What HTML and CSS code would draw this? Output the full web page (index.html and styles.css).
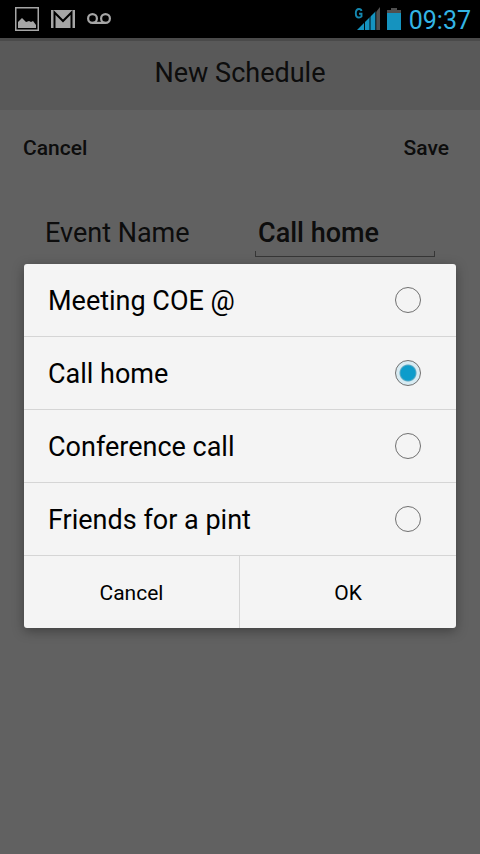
FILE: index.html
```
<!DOCTYPE html>
<html lang="en">
<head>
<meta charset="utf-8">
<meta name="viewport" content="width=device-width, initial-scale=1">
<title>New Schedule</title>
<link rel="stylesheet" href="styles.css">
</head>
<body>
<div class="status-bar">
  <div class="status-group notices">
    <svg width="24" height="24" viewBox="0 0 24 24" role="img" aria-label="Picture"><rect x="0.750" y="0.750" width="22.500" height="22.500" fill="none" stroke="#a6a6a6" stroke-width="1.500"/><path d="M3 21V15l4-4 4 4 3-1 2 1 2-1 3 4v3z" fill="#a6a6a6"/></svg>
    <svg width="24" height="20" viewBox="0 0 24 20" role="img" aria-label="Mail"><path d="M0 1h24v18H0z" fill="#a6a6a6"/><path d="M3.500 19V3.500L12 12l8.500-8.500V19" fill="none" stroke="#000" stroke-width="2"/></svg>
    <svg width="24" height="14" viewBox="0 0 24 14" role="img" aria-label="Voicemail"><g fill="none" stroke="#a6a6a6" stroke-width="2.200"><circle cx="5.500" cy="6.500" r="4.400"/><circle cx="18.500" cy="6.500" r="4.400"/><path d="M5.500 10.900h13"/></g></svg>
  </div>
  <div class="status-group system">
    <svg width="27" height="26" viewBox="0 0 27 26" role="img" aria-label="Signal"><path d="M7.500 5C7.200 3.600 6.300 3 5 3 3 3 1.800 4.500 1.800 7.200S3 11.500 5 11.500c1 0 1.900-.3 2.500-1V7.800H5" fill="none" stroke="#1488b0" stroke-width="1.900"/><path d="M22 6l4-5v23h-4z" fill="#505050"/><path d="M3 24L22 5v19z" fill="#1593bf"/><path d="M10.500 12v12M16 6v18M21.800 3v21" stroke="#000" stroke-width="0.900"/></svg>
    <svg width="14" height="22" viewBox="0 0 14 22" role="img" aria-label="Battery"><path d="M0 2h4V0h6v2h4v4H0z" fill="#505050"/><path d="M0 5h14v17H0z" fill="#1593bf"/></svg>
    <time class="clock">09:37</time>
  </div>
</div>
<div class="screen">
  <main class="page">
    <header class="title-bar"><h1>New Schedule</h1></header>
    <div class="actions">
      <button type="button">Cancel</button>
      <button type="button">Save</button>
    </div>
    <div class="field">
      <label for="event-name">Event Name</label>
      <div class="entry"><input id="event-name" type="text" value="Call home"></div>
    </div>
  </main>
  <div class="scrim">
    <form class="dialog" role="dialog" aria-label="Event Name">
      <label class="option"><span>Meeting COE @</span><input type="radio" name="event"></label>
      <label class="option"><span>Call home</span><input type="radio" name="event" checked></label>
      <label class="option"><span>Conference call</span><input type="radio" name="event"></label>
      <label class="option"><span>Friends for a pint</span><input type="radio" name="event"></label>
      <div class="dialog-buttons">
        <button type="button">Cancel</button>
        <button type="button">OK</button>
      </div>
    </form>
  </div>
</div>
</body>
</html>
```
FILE: styles.css
```
* { box-sizing: border-box; }

body {
  margin: 0;
  min-height: 100vh;
  display: flex;
  flex-direction: column;
  font-family: Roboto, "Liberation Sans", sans-serif;
  font-size: 27px;
  line-height: 32px;
  color: #000;
}

button, input { font: inherit; color: inherit; }

button {
  border: 0;
  padding: 0;
  background: none;
  font-size: 21px;
}

.status-bar {
  display: flex;
  justify-content: space-between;
  height: 38px;
  padding: 0 9px 0 15px;
  background: #000;
}

.status-group { display: flex; align-items: center; }
.notices { gap: 12px; }
.system { gap: 6px; }

.clock {
  padding: 3px 0 0 2px;
  font-size: 25px;
  color: #33b5e5;
}

.screen {
  position: relative;
  flex: 1;
  display: flex;
}

.page {
  flex: 1;
  background: #f3f3f3;
  color: #222;
}

.title-bar {
  height: 72px;
  padding-top: 16px;
  border-top: 3px solid #b8b8b8;
  background: #dedede;
  text-align: center;
}

h1 {
  margin: 0;
  font-size: 27px;
  font-weight: 400;
}

.actions {
  display: flex;
  justify-content: space-between;
  padding: 22px 31px 0 23px;
}

.actions button { font-weight: 500; }

.field {
  display: grid;
  grid-template-columns: 1fr 1fr;
  padding: 53px 45px 0;
}

.entry { padding-left: 15px; }

.entry input {
  display: block;
  width: 100%;
  height: 40px;
  padding: 0 3px 8px;
  border: 0;
  background:
    linear-gradient(#888, #888) left bottom / 100% 1px no-repeat,
    linear-gradient(#888, #888) left bottom / 1px 6px no-repeat,
    linear-gradient(#888, #888) right bottom / 1px 6px no-repeat;
  font-weight: 500;
}

.scrim {
  position: absolute;
  inset: 0;
  display: flex;
  align-items: center;
  justify-content: center;
  padding: 24px;
  background: rgba(0, 0, 0, 0.6);
}

.dialog {
  flex: 1;
  border-radius: 3px;
  background: #f4f4f4;
  box-shadow: 0 3px 12px rgba(0, 0, 0, 0.35);
}

.option {
  display: flex;
  align-items: center;
  justify-content: space-between;
  height: 73px;
  padding: 0 35px 0 24px;
  border-bottom: 1px solid #d5d5d5;
}

.option span { padding-top: 2px; }

.option input {
  appearance: none;
  width: 26px;
  height: 26px;
  margin: 0;
  border: 1px solid #707070;
  border-radius: 50%;
}

.option input:checked {
  background: radial-gradient(circle, #0d9ccb 0 7px, #5aa9c4 8px, #d8ebf2 9px);
}

.dialog-buttons {
  display: grid;
  grid-template-columns: 1fr 1fr;
  height: 72px;
}

.dialog-buttons button { padding-top: 2px; }
.dialog-buttons button:first-child { border-right: 1px solid #d5d5d5; }
```
